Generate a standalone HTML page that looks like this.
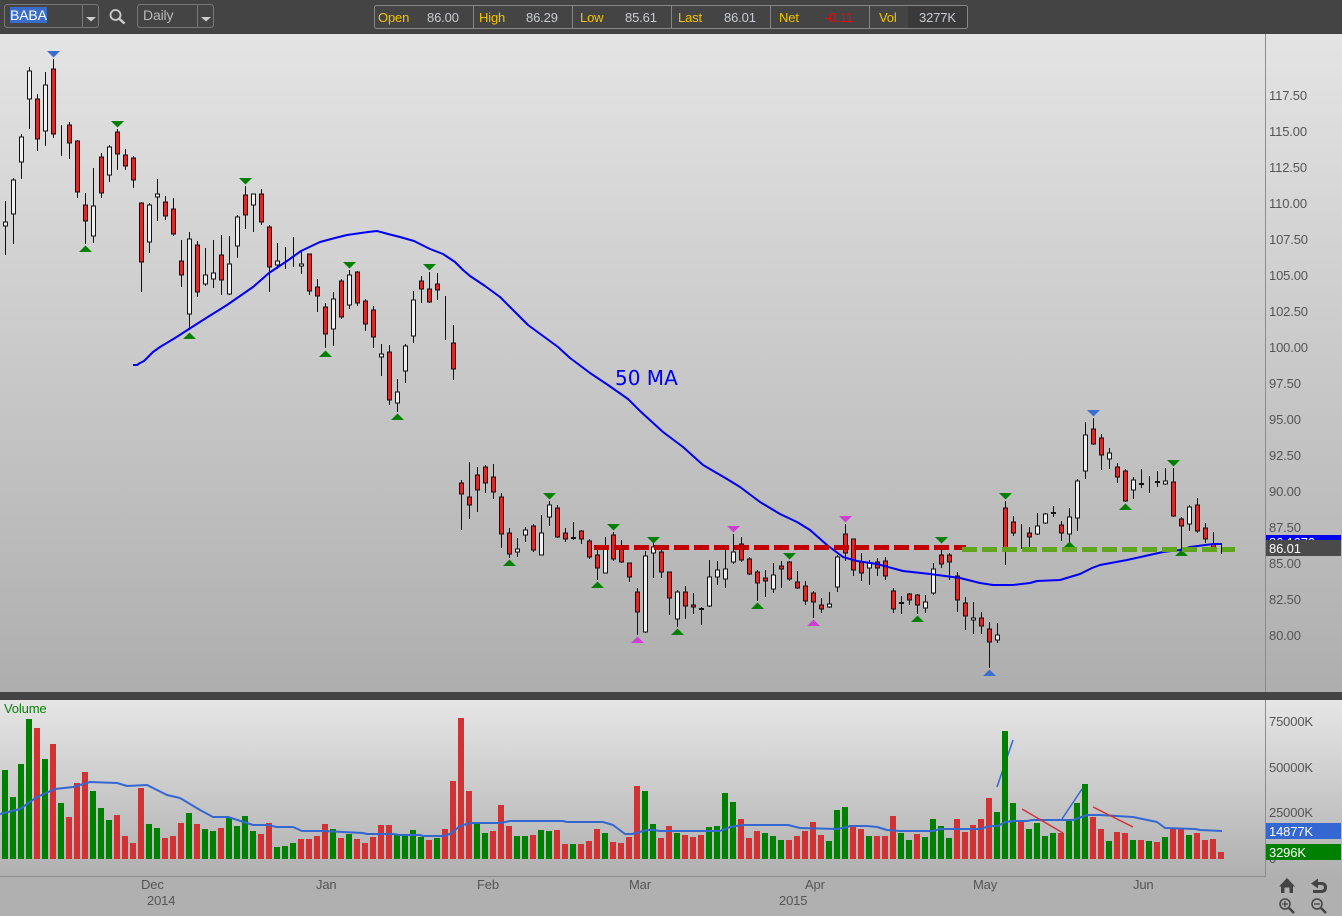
<!DOCTYPE html>
<html>
<head>
<meta charset="utf-8">
<title>BABA Daily</title>
<style>
html,body{margin:0;padding:0;background:#b0b0b0;width:1342px;height:916px;overflow:hidden}
svg{display:block}
text{font-family:"Liberation Sans",Arial,sans-serif;font-size:13px;letter-spacing:-.15px}
.ax{fill:#555}
.lb{fill:#f0c400}
.vl{fill:#c6ccd2}
</style>
</head>
<body>
<svg width="1342" height="916" viewBox="0 0 1342 916" xmlns="http://www.w3.org/2000/svg">
<defs>
<linearGradient id="g1" x1="0" y1="0" x2="0" y2="1"><stop offset="0" stop-color="#e4e4e4"/><stop offset="1" stop-color="#aeaeae"/></linearGradient>
<linearGradient id="g2" x1="0" y1="0" x2="0" y2="1"><stop offset="0" stop-color="#e6e6e6"/><stop offset="1" stop-color="#b0b0b0"/></linearGradient>
</defs>
<rect x="0" y="34" width="1342" height="658" fill="url(#g1)"/>
<rect x="0" y="700" width="1342" height="176" fill="url(#g2)"/>
<rect x="0" y="876" width="1342" height="40" fill="#b0b0b0"/>
<rect x="0" y="692" width="1342" height="8" fill="#444"/>
<rect x="0" y="0" width="1342" height="34" fill="#444"/>
<rect x="1265" y="34" width="1" height="658" fill="#8c8c8c"/>
<rect x="1265" y="700" width="1" height="177" fill="#8c8c8c"/>
<rect x="0" y="876" width="1265" height="1" fill="#8c8c8c"/>

<!-- toolbar -->
<rect x="4.5" y="4.5" width="94" height="23" rx="3" fill="none" stroke="#777"/>
<path d="M82.5 5V27" stroke="#777"/>
<rect x="10" y="7" width="37" height="16" fill="#3a6cc8"/>
<text x="10" y="20" fill="#fff" style="font-size:14px">BABA</text>
<path d="M86 17h10l-5 4.500z" fill="#ccc"/>
<circle cx="115.500" cy="15" r="5" fill="none" stroke="#ccc" stroke-width="1.800"/>
<path d="M119.500 19l5 4.500" stroke="#ccc" stroke-width="2.500" fill="none"/>
<rect x="137.500" y="4.500" width="76" height="23" rx="3" fill="none" stroke="#777"/>
<path d="M197.500 5V27" stroke="#777"/>
<text x="143" y="20" fill="#b9b9b9" style="font-size:14px">Daily</text>
<path d="M201 17h10l-5 4.500z" fill="#ccc"/>

<rect x="908" y="6" width="59" height="22" fill="#3a3a3a"/>
<rect x="374.500" y="5.500" width="593" height="23" rx="2" fill="none" stroke="#868686"/>
<path d="M473.500 6V28M572.500 6V28M671.500 6V28M770.500 6V28M869.500 6V28" stroke="#868686"/>
<text class="lb" x="378" y="22">Open</text><text class="vl" x="427" y="22">86.00</text>
<text class="lb" x="479" y="22">High</text><text class="vl" x="526" y="22">86.29</text>
<text class="lb" x="580" y="22">Low</text><text class="vl" x="625" y="22">85.61</text>
<text class="lb" x="678" y="22">Last</text><text class="vl" x="724" y="22">86.01</text>
<text class="lb" x="779" y="22">Net</text><text x="825" y="22" fill="#ff0000">-0.11</text>
<text class="lb" x="879" y="22">Vol</text><text class="vl" x="919" y="22">3277K</text>

<!-- wicks -->
<path fill="none" stroke="#111" stroke-width="1" d="M5.500 201V255M13.500 178V244M21.500 134V179M29.500 67V129M37.500 94V151M45.500 72V146M53.500 59V138M61.500 125V156M69.500 122V159M77.500 140V198M85.500 193V244M93.500 168V243M101.500 153V198M109.500 145V182M117.500 129V170M125.500 149V170M133.500 156V188M141.500 202V292M149.500 203V253M157.500 179V221M165.500 196V220M173.500 198V236M181.500 240V287M189.500 232V330M197.500 241V297M205.500 248V286M213.500 240V288M221.500 235V295M229.500 236V295M237.500 215V258M245.500 186V229M253.500 194V232M261.500 189V225M269.500 225V292M277.500 243V269M285.500 247V269M293.500 237V267M301.500 250V274M309.500 254V295M317.500 279V312M325.500 303V348M333.500 292V346M341.500 279V319M349.500 270V309M357.500 271V306M365.500 299V331M373.500 306V348M381.500 344V376M389.500 345V405M397.500 379V412M405.500 344V383M413.500 291V343M421.500 276V303M429.500 272V303M437.500 273V300M445.500 296V340M453.500 325V380M461.500 480V530M469.500 462V519M477.500 467V512M485.500 465V493M493.500 464V499M501.500 493V548M509.500 528V558M517.500 538V557M525.500 527V542M533.500 524V552M541.500 515V555M549.500 501V526M557.500 505V538M565.500 528V542M573.500 522V540M581.500 530V544M589.500 539V559M597.500 547V580M605.500 537V573M613.500 532V561M621.500 540V563M629.500 563V582M637.500 588V635M645.500 551V633M653.500 543V578M661.500 549V578M669.500 572V615M677.500 590V627M685.500 586V619M693.500 593V614M701.500 607V625M709.500 560V607M717.500 561V585M725.500 550V588M733.500 534V564M741.500 537V562M749.500 557V575M757.500 570V601M765.500 570V597M773.500 563V593M781.500 561V588M789.500 561V581M797.500 571V589M805.500 581V605M813.500 591V618M821.500 598V613M829.500 592V608M837.500 555V592M845.500 524V561M853.500 539V576M861.500 553V581M869.500 560V585M877.500 558V576M885.500 557V580M893.500 588V613M901.500 596V614M909.500 593V605M917.500 594V614M925.500 595V613M933.500 563V595M941.500 550V568M949.500 553V580M957.500 572V612M965.500 597V630M973.500 602V634M981.500 612V634M989.500 622V668M997.500 623V643M1005.500 501V565M1013.500 516V536M1021.500 524V549M1029.500 527V548M1037.500 513V535M1045.500 513V524M1053.500 506V517M1061.500 521V541M1069.500 508V544M1077.500 479V531M1085.500 422V479M1093.500 418V445M1101.500 434V470M1109.500 448V469M1117.500 463V483M1125.500 469V502M1133.500 477V499M1141.500 469V488M1149.500 476V493M1157.500 471V487M1165.500 468V485M1173.500 468V517M1181.500 517V550M1189.500 505V531M1197.500 498V533M1205.500 523V543M1213.500 532V548M1221.500 543V554"/>
<!-- doji -->
<path fill="#111" d="M571 537h5v2h-5zM699 608h5v2h-5zM899 602h5v2h-5zM1051 512h5v2h-5zM1139 483h5v2h-5zM1155 481h5v2h-5z"/>
<!-- red bodies -->
<path fill="#d42b2b" stroke="#111" stroke-width="1" d="M35.500 99h4v40h-4zM51.500 69h4v65h-4zM67.500 125h4v18h-4zM75.500 141h4v51h-4zM83.500 205h4v16h-4zM99.500 157h4v36h-4zM115.500 132h4v22h-4zM123.500 155h4v11h-4zM131.500 158h4v22h-4zM139.500 203h4v59h-4zM163.500 202h4v14h-4zM171.500 209h4v25h-4zM179.500 261h4v14h-4zM195.500 245h4v47h-4zM219.500 255h4v25h-4zM243.500 195h4v20h-4zM259.500 194h4v28h-4zM267.500 227h4v40h-4zM307.500 254h4v37h-4zM315.500 287h4v9h-4zM323.500 307h4v27h-4zM339.500 281h4v36h-4zM355.500 272h4v31h-4zM363.500 301h4v23h-4zM371.500 310h4v27h-4zM387.500 352h4v48h-4zM419.500 281h4v8h-4zM427.500 289h4v13h-4zM435.500 284h4v6h-4zM451.500 343h4v26h-4zM459.500 483h4v11h-4zM467.500 497h4v8h-4zM475.500 475h4v15h-4zM483.500 467h4v16h-4zM491.500 477h4v15h-4zM499.500 497h4v37h-4zM507.500 533h4v21h-4zM531.500 526h4v24h-4zM555.500 508h4v29h-4zM563.500 533h4v6h-4zM579.500 531h4v8h-4zM587.500 541h4v16h-4zM595.500 555h4v13h-4zM611.500 535h4v24h-4zM619.500 547h4v15h-4zM627.500 563h4v14h-4zM635.500 592h4v20h-4zM659.500 552h4v20h-4zM667.500 572h4v26h-4zM683.500 592h4v14h-4zM691.500 605h4v2h-4zM739.500 544h4v16h-4zM747.500 559h4v15h-4zM755.500 572h4v11h-4zM763.500 578h4v3h-4zM779.500 566h4v3h-4zM787.500 562h4v17h-4zM795.500 582h4v6h-4zM803.500 586h4v15h-4zM811.500 593h4v9h-4zM819.500 605h4v4h-4zM843.500 534h4v19h-4zM851.500 539h4v31h-4zM859.500 562h4v11h-4zM875.500 562h4v6h-4zM883.500 561h4v15h-4zM891.500 591h4v18h-4zM907.500 594h4v6h-4zM915.500 595h4v10h-4zM939.500 555h4v9h-4zM947.500 555h4v7h-4zM955.500 576h4v24h-4zM963.500 603h4v13h-4zM979.500 618h4v8h-4zM987.500 629h4v13h-4zM1003.500 508h4v42h-4zM1011.500 522h4v11h-4zM1027.500 533h4v4h-4zM1059.500 525h4v8h-4zM1091.500 429h4v15h-4zM1099.500 438h4v17h-4zM1115.500 467h4v10h-4zM1123.500 471h4v30h-4zM1171.500 482h4v34h-4zM1179.500 519h4v7h-4zM1195.500 505h4v26h-4zM1203.500 528h4v11h-4zM1211.500 544h4v6h-4z"/>
<!-- white bodies -->
<path fill="#f0f0f0" stroke="#111" stroke-width="1" d="M3.500 222h4v4h-4zM11.500 180h4v34h-4zM19.500 137h4v25h-4zM27.500 71h4v28h-4zM43.500 85h4v46h-4zM91.500 206h4v30h-4zM107.500 147h4v28h-4zM147.500 205h4v37h-4zM155.500 194h4v3h-4zM187.500 239h4v75h-4zM203.500 275h4v9h-4zM211.500 273h4v6h-4zM227.500 264h4v30h-4zM235.500 217h4v29h-4zM251.500 194h4v11h-4zM275.500 261h4v4h-4zM299.500 264h4v2h-4zM331.500 299h4v30h-4zM347.500 275h4v30h-4zM379.500 354h4v3h-4zM395.500 392h4v11h-4zM403.500 346h4v25h-4zM411.500 300h4v36h-4zM515.500 549h4v3h-4zM523.500 530h4v5h-4zM539.500 533h4v22h-4zM547.500 505h4v12h-4zM603.500 549h4v24h-4zM643.500 556h4v76h-4zM651.500 547h4v6h-4zM675.500 592h4v27h-4zM707.500 577h4v29h-4zM715.500 570h4v7h-4zM723.500 569h4v10h-4zM731.500 552h4v10h-4zM771.500 575h4v14h-4zM827.500 604h4v3h-4zM835.500 557h4v30h-4zM867.500 563h4v5h-4zM923.500 602h4v6h-4zM931.500 569h4v24h-4zM971.500 618h4v2h-4zM995.500 635h4v5h-4zM1035.500 526h4v8h-4zM1043.500 514h4v9h-4zM1067.500 517h4v17h-4zM1075.500 481h4v37h-4zM1083.500 435h4v36h-4zM1107.500 453h4v6h-4zM1131.500 480h4v10h-4zM1163.500 481h4v3h-4zM1187.500 507h4v17h-4z"/>
<!-- markers -->
<path fill="#008000" d="M111 121h13l-6.500 6.500zM239 178h13l-6.500 6.500zM343 262h13l-6.500 6.500zM423 264h13l-6.500 6.500zM543 493h13l-6.500 6.500zM607 524h13l-6.500 6.500zM647 537h13l-6.500 6.500zM783 553h13l-6.500 6.500zM935 537h13l-6.500 6.500zM999 493h13l-6.500 6.500zM1167 460h13l-6.500 6.500zM79 252h13l-6.500-6.500zM183 339h13l-6.500-6.500zM319 357h13l-6.500-6.500zM391 420h13l-6.500-6.500zM503 566h13l-6.500-6.500zM591 588h13l-6.500-6.500zM671 635h13l-6.500-6.500zM751 609h13l-6.500-6.500zM911 622h13l-6.500-6.500zM1063 548h13l-6.500-6.500zM1119 510h13l-6.500-6.500zM1175 556h13l-6.500-6.500z"/>
<path fill="#3a6fd0" d="M47 51h13l-6.500 6.500zM1087 410h13l-6.500 6.500zM983 676h13l-6.500-6.500z"/>
<path fill="#d040d0" d="M727 526h13l-6.500 6.500zM839 516h13l-6.500 6.500zM631 643h13l-6.500-6.500zM807 626h13l-6.500-6.500z"/>

<!-- 50 MA -->
<path fill="none" stroke="#0000f8" stroke-width="2" stroke-linejoin="round" d="M133 365L137 365L140 363L144 361L147 358L153 352L160 347L175 338L189 329L203 320L227 305L253 287L269 273L287 261L301 251L320 242L335 238L347 235L368 232L377 231L388 234L400 237L414 241L430 249L443 254L455 262L463 270L470 276L485 286L500 297L514 311L528 325L543 336L558 347L570 358L590 373L608 385L628 399L640 411L663 432L683 447L703 465L727 479L740 487L760 502L780 514L797 522L810 530L827 545L843 557L857 561L877 564L903 571L930 574L960 578L980 583L993 585L1013 585L1030 583L1037 581L1060 580L1080 574L1092 568L1100 565L1127 560L1163 552L1180 550L1190 547L1213 544L1221 544"/>
<text x="615" y="385" fill="#0000f0" style="font-family:'DejaVu Sans',sans-serif;font-size:20px;letter-spacing:0">50 MA</text>

<!-- support lines -->
<path d="M594 547.500H966" stroke="#c00000" stroke-width="5" stroke-dasharray="15 5" fill="none"/>
<path d="M962 549.500H1235" stroke="#5fa61e" stroke-width="5" stroke-dasharray="15 5" fill="none"/>

<!-- price axis -->
<g class="ax">
<text x="1269" y="100">117.50</text><text x="1269" y="136">115.00</text><text x="1269" y="172">112.50</text><text x="1269" y="208">110.00</text><text x="1269" y="244">107.50</text><text x="1269" y="280">105.00</text><text x="1269" y="316">102.50</text><text x="1269" y="352">100.00</text><text x="1269" y="388">97.50</text><text x="1269" y="424">95.00</text><text x="1269" y="460">92.50</text><text x="1269" y="496">90.00</text><text x="1269" y="532">87.50</text><text x="1269" y="568">85.00</text><text x="1269" y="604">82.50</text><text x="1269" y="640">80.00</text>
</g>
<rect x="1266" y="535" width="75" height="6" fill="#0000f0"/>
<text x="1269" y="547" fill="#fff">86.1072</text>
<rect x="1266" y="540" width="75" height="16" fill="#4a4a4a"/>
<text x="1269" y="553" fill="#fff">86.01</text>

<!-- volume -->
<text x="4" y="713" fill="#0a800a">Volume</text>
<path fill="none" stroke="#3567d3" stroke-width="1.500" d="M997 787L1013 740"/>
<path fill="none" stroke="#008000" stroke-width="6" shape-rendering="crispEdges" d="M5 770V859M13 797V859M21 764V859M29 719V859M45 759V859M61 803V859M93 791V859M101 808V859M109 820V859M149 824V859M157 828V859M189 813V859M205 829V859M213 831V859M229 817V859M237 826V859M245 816V859M253 831V859M277 847V859M285 846V859M293 843V859M333 829V859M349 834V859M397 834V859M405 836V859M413 830V859M421 837V859M437 838V859M477 824V859M485 833V859M517 836V859M525 836V859M541 830V859M549 831V859M573 844V859M605 833V859M645 791V859M653 824V859M677 833V859M709 827V859M717 826V859M725 793V859M733 802V859M765 833V859M773 836V859M781 840V859M829 841V859M837 810V859M845 807V859M869 836V859M901 833V859M909 840V859M925 837V859M933 819V859M941 826V859M949 838V859M997 812V859M1005 731V859M1013 803V859M1029 829V859M1037 823V859M1045 836V859M1053 833V859M1069 820V859M1077 803V859M1085 784V859M1109 841V859M1133 840V859M1149 841V859M1165 837V859M1189 835V859"/>
<path fill="none" stroke="#d03333" stroke-width="6" shape-rendering="crispEdges" d="M37 728V859M53 744V859M69 817V859M77 783V859M85 772V859M117 815V859M125 836V859M133 843V859M141 788V859M165 838V859M173 836V859M181 823V859M197 824V859M221 828V859M261 834V859M269 823V859M301 839V859M309 839V859M317 836V859M325 824V859M341 838V859M357 839V859M365 843V859M373 837V859M381 825V859M389 825V859M429 840V859M445 829V859M453 781V859M461 718V859M469 791V859M493 831V859M501 805V859M509 826V859M533 835V859M557 830V859M565 844V859M581 844V859M589 841V859M597 829V859M613 842V859M621 843V859M629 837V859M637 786V859M661 838V859M669 826V859M685 835V859M693 837V859M701 835V859M741 819V859M749 838V859M757 831V859M789 840V859M797 836V859M805 831V859M813 822V859M821 835V859M853 825V859M861 829V859M877 836V859M885 836V859M893 816V859M917 834V859M957 819V859M965 832V859M973 825V859M981 819V859M989 798V859M1021 821V859M1061 833V859M1093 817V859M1101 829V859M1117 832V859M1125 833V859M1141 840V859M1157 842V859M1173 829V859M1181 829V859M1197 833V859M1205 840V859M1213 839V859M1221 852V859"/>
<path fill="none" stroke="#3567d3" stroke-width="2" stroke-linejoin="round" d="M0 814L20 809L37 797L55 789L73 787L90 782L117 783L127 786L147 785L167 795L180 798L200 810L213 817L228 817L253 825L267 825L277 827L293 827L302 831L322 831L343 832L363 833L367 834L393 834L400 835L420 835L423 836L443 836L450 834L460 826L470 823L500 823L510 821L563 821L567 822L603 822L613 825L625 834L632 834L647 830L653 830L660 831L720 831L730 827L743 825L788 825L800 828L837 829L847 827L850 826L867 826L877 827L887 830L900 831L933 831L940 829L980 829L990 826L998 826L1005 822L1013 821L1027 821L1032 820L1073 820L1087 815L1100 815L1133 817L1157 822L1165 828L1195 829L1200 830L1222 831"/>
<path fill="none" stroke="#3567d3" stroke-width="1.500" d="M1062 819L1082 789"/>
<path fill="none" stroke="#d03333" stroke-width="1.500" d="M1022 809L1063 833M1093 807L1133 827"/>

<g class="ax">
<text x="1269" y="726">75000K</text><text x="1269" y="772">50000K</text><text x="1269" y="817">25000K</text><text x="1269" y="863">0</text>
<text x="141" y="889">Dec</text><text x="147" y="905">2014</text><text x="316" y="889">Jan</text><text x="477" y="889">Feb</text><text x="629" y="889">Mar</text><text x="805" y="889">Apr</text><text x="779" y="905">2015</text><text x="973" y="889">May</text><text x="1133" y="889">Jun</text>
</g>
<rect x="1266" y="823" width="75" height="16" fill="#3567d3"/>
<text x="1269" y="836" fill="#fff">14877K</text>
<rect x="1266" y="844" width="75" height="16" fill="#008000"/>
<text x="1269" y="857" fill="#fff">3296K</text>

<!-- bottom icons -->
<path fill="#444" d="M1279 886.500L1287 878L1295 886.500H1293V893H1289.500V887.500H1284.500V893H1281V886.500Z"/>
<path fill="#444" d="M1311 883.500L1318 878.500V888.500Z"/>
<path fill="none" stroke="#444" stroke-width="3" d="M1316 883.500H1321Q1325.500 883.500 1325.500 887.500Q1325.500 891.500 1321 891.500H1313"/>
<circle cx="1285" cy="904" r="5" fill="none" stroke="#444" stroke-width="1.500"/>
<path d="M1282 904h6M1285 901v6" stroke="#444" stroke-width="1.300" fill="none"/>
<path d="M1289 908l5 5" stroke="#444" stroke-width="2.500" fill="none"/>
<circle cx="1317" cy="904" r="5" fill="none" stroke="#444" stroke-width="1.500"/>
<path d="M1314 904h6" stroke="#444" stroke-width="1.300" fill="none"/>
<path d="M1321 908l5 5" stroke="#444" stroke-width="2.500" fill="none"/>
</svg>
</body>
</html>
